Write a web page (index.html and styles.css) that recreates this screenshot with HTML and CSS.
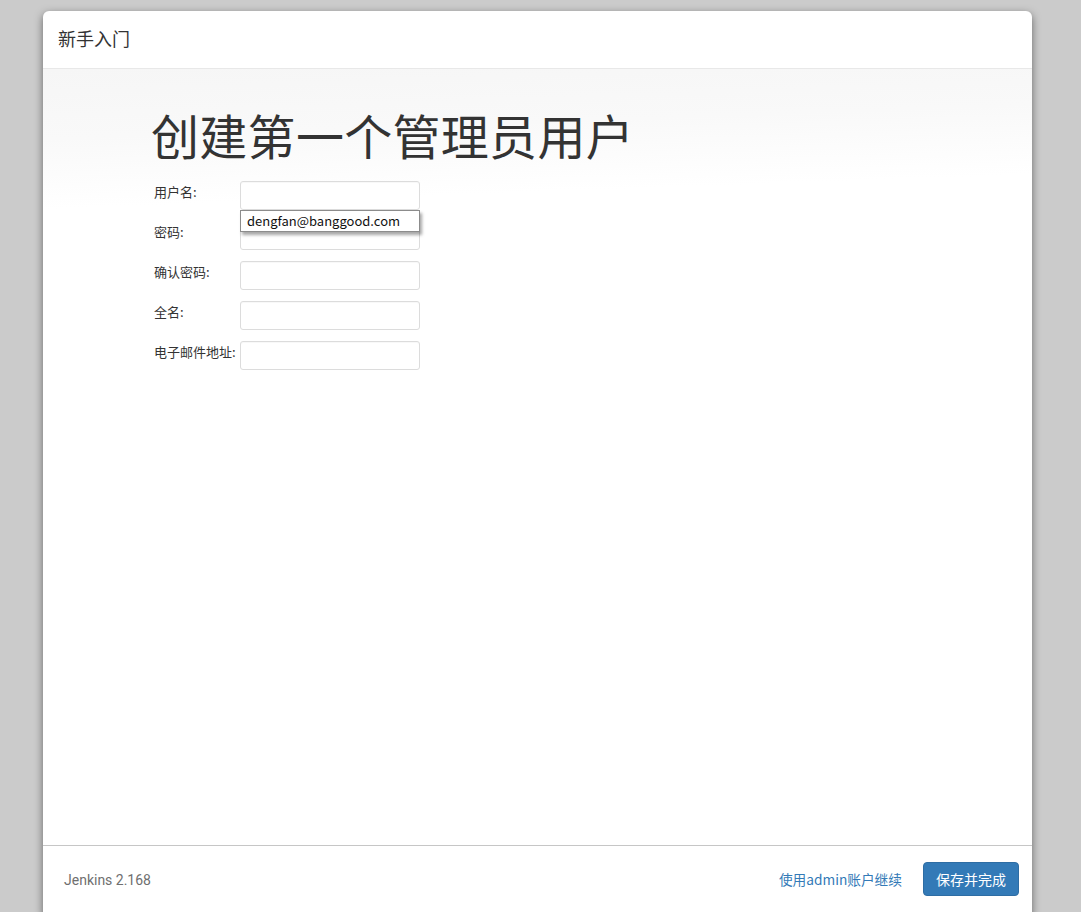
FILE: index.html
```html
<!DOCTYPE html>
<html lang="zh-CN">
<head>
<meta charset="utf-8">
<title>新手入门</title>
<link rel="stylesheet" href="styles.css">
</head>
<body>
<div class="modal">
  <div class="modal-header">新手入门</div>
  <div class="modal-body">
    <h1 class="title">创建第一个管理员用户</h1>
    <form class="form">
      <div class="row">
        <label class="label">用户名:</label>
        <div class="field">
          <input class="input" type="text">
          <div class="suggest">dengfan@banggood.com</div>
        </div>
      </div>
      <div class="row">
        <label class="label">密码:</label>
        <div class="field"><input class="input" type="password"></div>
      </div>
      <div class="row">
        <label class="label">确认密码:</label>
        <div class="field"><input class="input" type="password"></div>
      </div>
      <div class="row">
        <label class="label">全名:</label>
        <div class="field"><input class="input" type="text"></div>
      </div>
      <div class="row">
        <label class="label">电子邮件地址:</label>
        <div class="field"><input class="input" type="text"></div>
      </div>
    </form>
  </div>
  <div class="modal-footer">
    <span class="version">Jenkins 2.168</span>
    <div class="actions">
      <a class="link" href="#">使用admin账户继续</a>
      <button class="btn" type="button">保存并完成</button>
    </div>
  </div>
</div>
</body>
</html>
```
FILE: styles.css
```css
html, body {
  margin: 0;
  padding: 0;
  height: 100%;
  overflow: hidden;
}
body {
  background: #cbcbcb;
  font-family: "Open Sans", "Noto Sans CJK SC", sans-serif;
  color: #333;
}
.modal {
  box-sizing: border-box;
  margin: 11px 0 0 43px;
  width: 989px;
  height: 907px;
  background: #fff;
  border-radius: 6px;
  box-shadow: 0 3px 9px rgba(0, 0, 0, 0.5);
  display: flex;
  flex-direction: column;
  overflow: hidden;
}
.modal-header {
  box-sizing: border-box;
  height: 58px;
  padding: 0 15px 3px 15px;
  display: flex;
  align-items: center;
  font-family: "Noto Sans CJK SC", sans-serif;
  font-size: 18px;
  color: #333;
  border-bottom: 1px solid #e8e8e8;
}
.modal-body {
  flex: 1;
  padding: 37px 0 0 108px;
  background: linear-gradient(178deg, #f6f6f6 0px, #f9f9f9 70px, #ffffff 140px);
}
.title {
  margin: 0 0 22px 0;
  font-family: "Noto Sans CJK SC", sans-serif;
  font-weight: 400;
  font-size: 48px;
  line-height: 56px;
  color: #333;
  letter-spacing: 0.3px;
}
.form {
  display: flex;
  flex-direction: column;
  gap: 11px;
  margin-top: -3px;
}
.row {
  display: flex;
  align-items: flex-start;
}
.label {
  width: 89px;
  padding: 2px 0 0 3px;
  box-sizing: border-box;
  font-family: "Noto Sans CJK SC", sans-serif;
  font-size: 13px;
  color: #333;
  line-height: 18px;
  white-space: nowrap;
}
.field {
  position: relative;
}
.input {
  display: block;
  box-sizing: border-box;
  width: 180px;
  height: 29px;
  margin: 0;
  border: 1px solid #dcdcdc;
  border-radius: 3px;
  background: #fff;
  box-shadow: inset 0 1px 1px rgba(0, 0, 0, 0.03);
}
.suggest {
  position: absolute;
  left: 0;
  top: 29px;
  box-sizing: border-box;
  width: 180px;
  height: 22px;
  padding: 0 0 0 6px;
  background: #fff;
  border: 1px solid #8c8c8c;
  box-shadow: 2px 3px 3px rgba(0, 0, 0, 0.35);
  font-family: "Noto Sans CJK SC", sans-serif;
  font-size: 13px;
  line-height: 20px;
  color: #111;
  z-index: 2;
}
.modal-footer {
  box-sizing: border-box;
  height: 73px;
  border-top: 1px solid #c6c6c6;
  display: flex;
  align-items: center;
  justify-content: space-between;
  padding: 0 13px 7px 21px;
}
.version {
  font-family: "Roboto", "Open Sans", sans-serif;
  font-size: 14px;
  color: #6f6f6f;
  margin-top: 2px;
}
.actions {
  display: flex;
  align-items: center;
  gap: 21px;
}
.link {
  font-family: "Noto Sans CJK SC", sans-serif;
  font-size: 13.7px;
  color: #337ab7;
  text-decoration: none;
}
.btn {
  box-sizing: border-box;
  width: 96px;
  height: 34px;
  border: 1px solid #2e6da4;
  border-radius: 4px;
  background: #337ab7;
  color: #fff;
  font-family: "Noto Sans CJK SC", sans-serif;
  font-size: 14px;
  padding: 0;
}
```
